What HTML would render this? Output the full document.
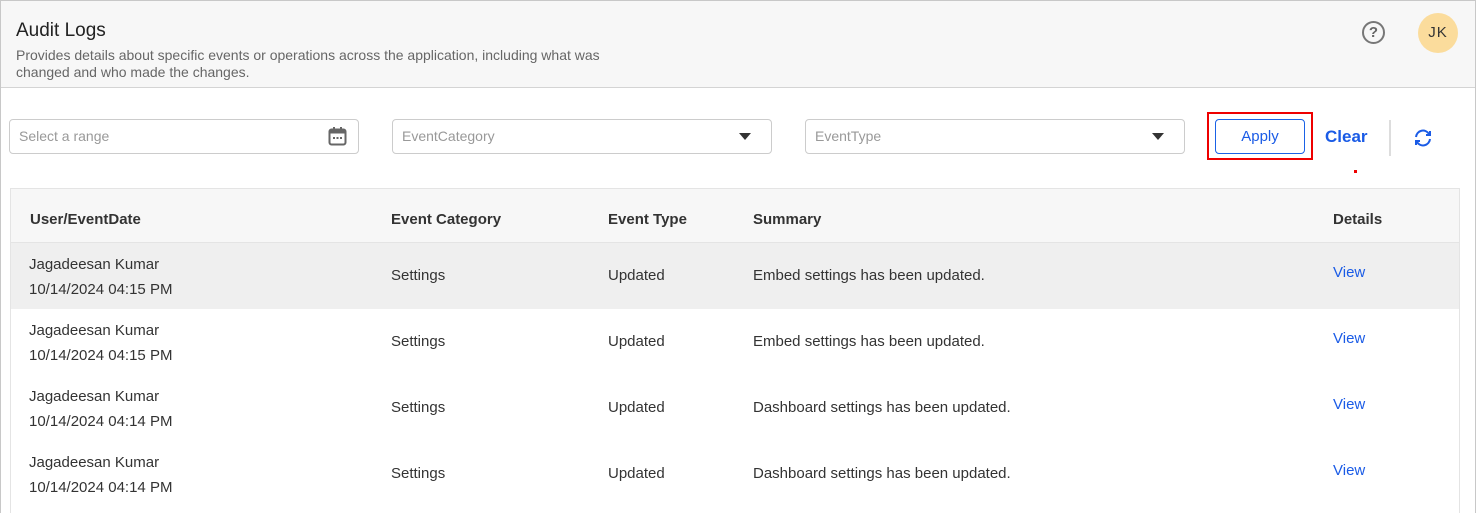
<!DOCTYPE html>
<html><head><style>
*{box-sizing:border-box;margin:0;padding:0}
body{width:1476px;height:513px;overflow:hidden;font-family:"Liberation Sans",Arial,sans-serif;background:#fff;position:relative;color:#333}
.frame{position:absolute;left:0;top:0;width:1476px;height:513px;border:1px solid #c8c8c8;border-bottom:none}
.hdr{position:absolute;left:1px;top:1px;width:1474px;height:87px;background:#f7f7f7;border-bottom:1px solid #d4d4d4}
.title{position:absolute;left:15px;top:19px;font-size:19px;color:#222}
.desc{position:absolute;left:15px;top:46px;font-size:14px;color:#666;line-height:17px;width:610px}
.help{position:absolute;left:1361px;top:20px;width:23px;height:23px;border:2px solid #777;border-radius:50%;text-align:center;font-size:15px;line-height:19px;color:#666;font-weight:bold}
.av{position:absolute;left:1417px;top:12px;width:40px;height:40px;border-radius:50%;background:#fbdc9c;text-align:center;line-height:40px;font-size:15px;color:#333;letter-spacing:1px}
.inp{position:absolute;top:119px;height:35px;border:1px solid #ccc;border-radius:4px;font-size:14px;color:#999;padding:8px 9px}
.tri{position:absolute;right:20px;top:13px;width:0;height:0;border-left:6px solid transparent;border-right:6px solid transparent;border-top:7px solid #333}
.apply{position:absolute;left:1207px;top:112px;width:106px;height:48px;border:2px solid #e00}
.apply div{position:absolute;left:6px;top:5px;width:90px;height:35px;border:1px solid #1a62e6;border-radius:4px;color:#1a5be6;font-size:15px;text-align:center;line-height:33px}
.clear{position:absolute;left:1325px;top:127px;font-size:17px;color:#1a5be6;font-weight:bold}
.sep{position:absolute;left:1389px;top:120px;width:2px;height:36px;background:#ddd}
table{position:absolute;left:10px;top:188px;width:1450px;border-collapse:collapse;font-size:15px;table-layout:fixed}
th{background:#f7f7f7;height:54px;padding-top:8px;text-align:left;font-weight:bold;color:#333;border-top:1px solid #e4e4e4;border-bottom:1px solid #e4e4e4}
td{height:66px;color:#333}
tr.sel td{background:#efefef}
.v{color:#1a5be6}
</style></head><body>
<div class="frame"></div>
<div class="hdr">
<div class="title">Audit Logs</div>
<div class="desc">Provides details about specific events or operations across the application, including what was changed and who made the changes.</div>
<div class="help">?</div>
<div class="av">JK</div>
</div>
<div class="inp" style="left:9px;width:350px">Select a range
<svg style="position:absolute;right:11px;top:6px" width="19" height="20" viewBox="0 0 19 20"><rect x="1.5" y="3.5" width="16" height="15" rx="2" fill="none" stroke="#666" stroke-width="2"/><rect x="1.5" y="3.5" width="16" height="4" fill="#666"/><rect x="5" y="1" width="2" height="4" fill="#666"/><rect x="12" y="1" width="2" height="4" fill="#666"/><rect x="5" y="11" width="2" height="2" fill="#666"/><rect x="8.5" y="11" width="2" height="2" fill="#666"/><rect x="12" y="11" width="2" height="2" fill="#666"/></svg></div>
<div class="inp" style="left:392px;width:380px">EventCategory<div class="tri"></div></div>
<div class="inp" style="left:805px;width:380px">EventType<div class="tri"></div></div>
<div class="apply"><div>Apply</div></div>
<div class="clear">Clear</div>
<div style="position:absolute;left:1354px;top:170px;width:3px;height:3px;background:#e00"></div>
<div class="sep"></div>
<svg style="position:absolute;left:1413px;top:128px" width="20" height="20" viewBox="0 0 20 20" fill="none" stroke="#1a5be6" stroke-width="2"><path d="M3 9a7 7 0 0 1 13-3"/><path d="M17 3v4h-4"/><path d="M17 11a7 7 0 0 1-13 3"/><path d="M3 17v-4h4"/></svg>
<table>
<colgroup><col style="width:381px"><col style="width:217px"><col style="width:145px"><col style="width:580px"><col></colgroup>
<tr><th style="padding-left:20px">User/EventDate</th><th>Event Category</th><th>Event Type</th><th>Summary</th><th>Details</th></tr>
<tr class="sel"><td style="padding-left:19px;line-height:25px;padding-top:2px">Jagadeesan Kumar<br>10/14/2024 04:15 PM</td><td>Settings</td><td>Updated</td><td>Embed settings has been updated.</td><td class="v" style="padding-bottom:6px">View</td></tr>
<tr><td style="padding-left:19px;line-height:25px;padding-top:2px">Jagadeesan Kumar<br>10/14/2024 04:15 PM</td><td>Settings</td><td>Updated</td><td>Embed settings has been updated.</td><td class="v" style="padding-bottom:6px">View</td></tr>
<tr><td style="padding-left:19px;line-height:25px;padding-top:2px">Jagadeesan Kumar<br>10/14/2024 04:14 PM</td><td>Settings</td><td>Updated</td><td>Dashboard settings has been updated.</td><td class="v" style="padding-bottom:6px">View</td></tr>
<tr><td style="padding-left:19px;line-height:25px;padding-top:2px">Jagadeesan Kumar<br>10/14/2024 04:14 PM</td><td>Settings</td><td>Updated</td><td>Dashboard settings has been updated.</td><td class="v" style="padding-bottom:6px">View</td></tr>
</table>
<div style="position:absolute;left:1459px;top:188px;width:1px;height:325px;background:#e4e4e4"></div>
<div style="position:absolute;left:10px;top:188px;width:1px;height:325px;background:#e4e4e4"></div>
</body></html>
